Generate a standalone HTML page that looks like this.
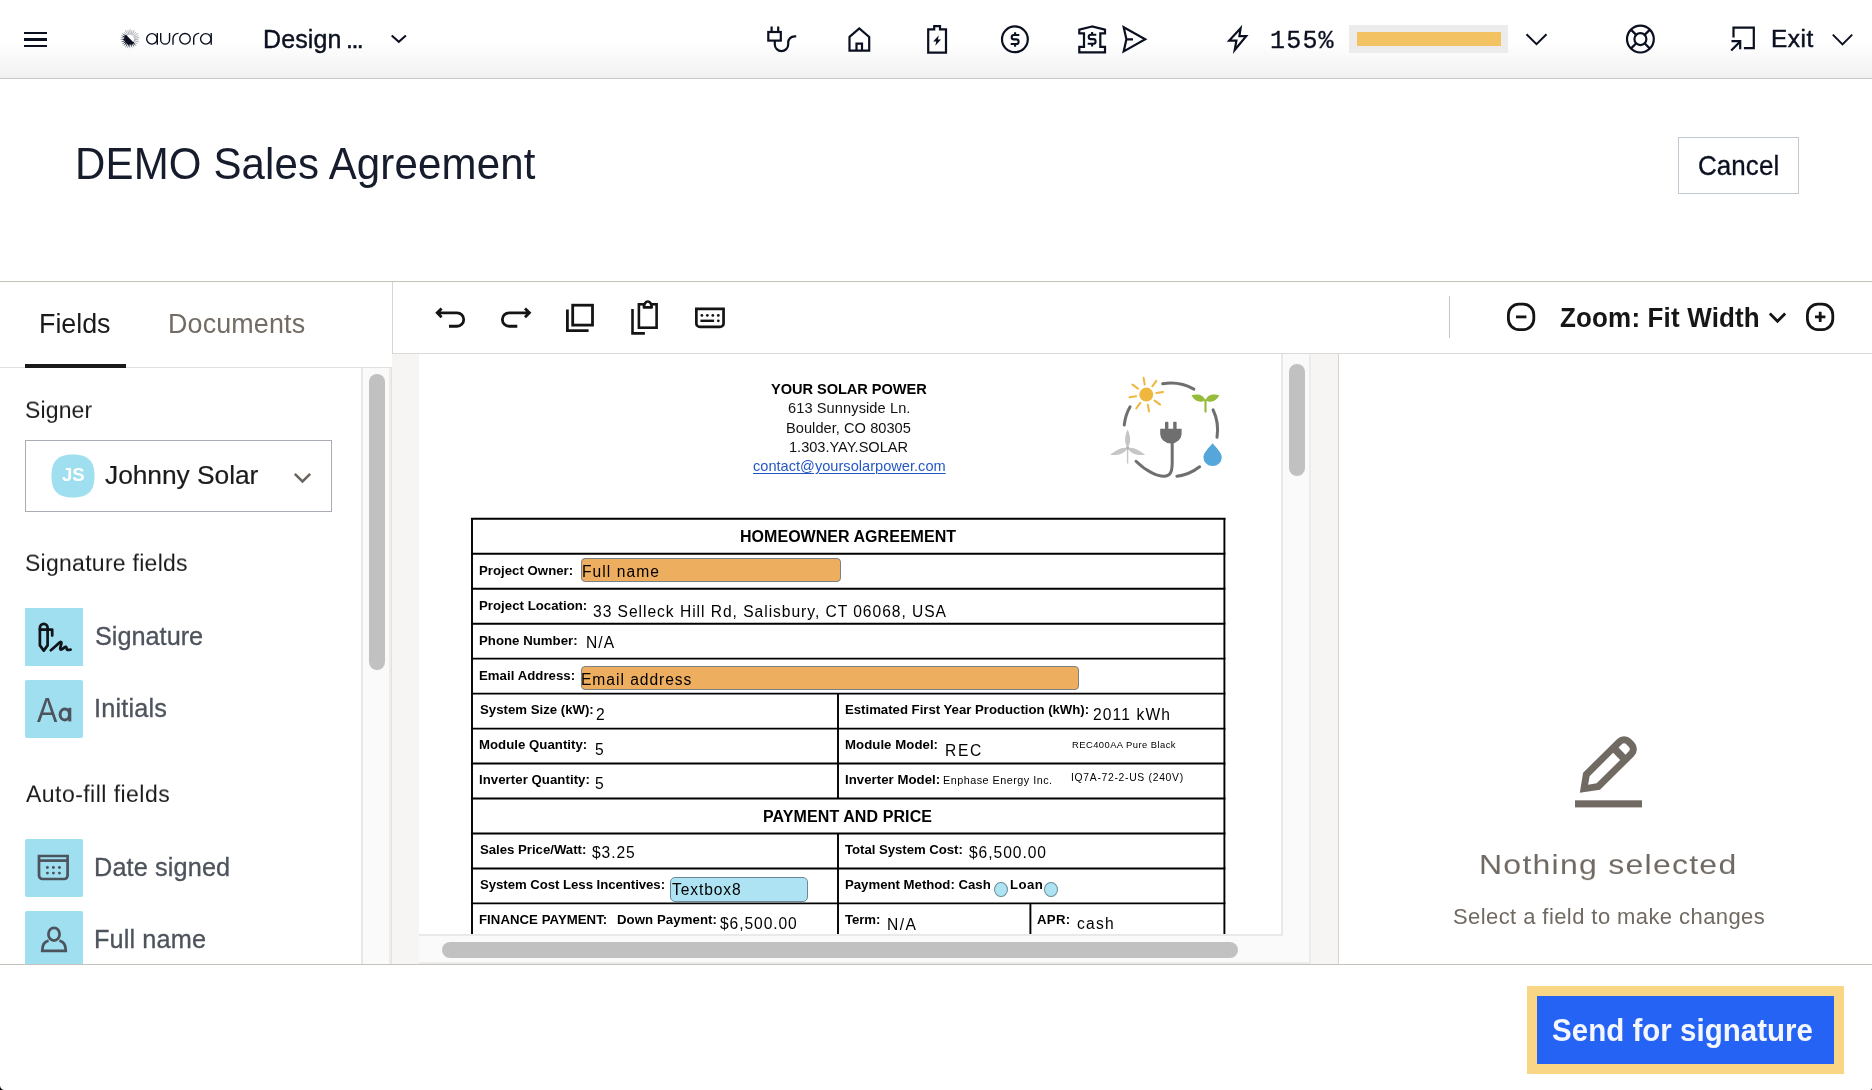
<!DOCTYPE html>
<html lang="en"><head><meta charset="utf-8"><title>DEMO Sales Agreement</title><style>
html,body{margin:0;padding:0;}
body{width:1872px;height:1090px;overflow:hidden;background:#fff;position:relative;
font-family:"Liberation Sans",sans-serif;}
.b{position:absolute;box-sizing:border-box;}
.t{position:absolute;white-space:nowrap;line-height:1;will-change:transform;font-family:"Liberation Sans",sans-serif;}
svg{position:absolute;overflow:visible;}
</style></head>
<body>
<!-- top bar -->
<div class="b" style="left:0px;top:0px;width:1872px;height:78px;background:linear-gradient(#fff 0%,#fff 54%,#f1f1f1 100%);"></div>
<div class="b" style="left:0px;top:78px;width:1872px;height:1px;background:#c7c9c9;"></div>
<div class="b" style="left:24px;top:31.5px;width:23px;height:2.4px;background:#0b1020;"></div>
<div class="b" style="left:24px;top:38.3px;width:23px;height:2.4px;background:#0b1020;"></div>
<div class="b" style="left:24px;top:45.0px;width:23px;height:2.4px;background:#0b1020;"></div>
<svg width="1872" height="78" style="left:0;top:0" viewBox="0 0 1872 78"><g stroke-linecap="butt"><line x1="134.07" y1="39.31" x2="138.64" y2="39.86" stroke="#5d6372" stroke-width="0.5"/><line x1="133.83" y1="40.29" x2="138.97" y2="42.24" stroke="#5d6372" stroke-width="0.5"/><line x1="133.36" y1="41.19" x2="137.14" y2="43.80" stroke="#5d6372" stroke-width="0.5"/><path d="M132.50 42.64L133.40 41.85L136.53 46.29Z" fill="#0b1020"/><path d="M131.51 43.15L132.57 42.59L134.55 47.65Z" fill="#0b1020"/><path d="M130.42 43.41L131.58 43.12L132.29 48.51Z" fill="#0b1020"/><path d="M129.30 43.40L130.50 43.40L129.90 48.80Z" fill="#0b1020"/><path d="M128.22 43.12L129.38 43.41L127.51 48.51Z" fill="#0b1020"/><path d="M127.23 42.59L128.29 43.15L125.25 47.65Z" fill="#0b1020"/><path d="M126.40 41.85L127.30 42.64L123.27 46.29Z" fill="#0b1020"/><path d="M125.77 40.92L126.46 41.91L121.67 44.48Z" fill="#0b1020"/><path d="M125.39 39.87L125.81 40.99L120.55 42.35Z" fill="#0b1020"/><path d="M125.26 38.76L125.41 39.95L119.97 40.01Z" fill="#0b1020"/><path d="M125.41 37.65L125.26 38.84L119.97 37.59Z" fill="#0b1020"/><path d="M125.81 36.61L125.39 37.73L120.55 35.25Z" fill="#0b1020"/><path d="M126.46 35.69L125.77 36.68L121.67 33.12Z" fill="#0b1020"/><line x1="127.11" y1="35.66" x2="124.06" y2="32.21" stroke="#5d6372" stroke-width="0.5"/><line x1="127.95" y1="35.08" x2="125.39" y2="30.21" stroke="#5d6372" stroke-width="0.5"/><line x1="128.89" y1="34.72" x2="127.79" y2="30.26" stroke="#5d6372" stroke-width="0.5"/><line x1="129.90" y1="34.60" x2="129.90" y2="29.10" stroke="#5d6372" stroke-width="0.5"/><line x1="130.91" y1="34.72" x2="132.01" y2="30.26" stroke="#5d6372" stroke-width="0.5"/><line x1="131.85" y1="35.08" x2="134.41" y2="30.21" stroke="#5d6372" stroke-width="0.5"/><line x1="132.69" y1="35.66" x2="135.74" y2="32.21" stroke="#5d6372" stroke-width="0.5"/><line x1="133.36" y1="36.41" x2="137.88" y2="33.29" stroke="#5d6372" stroke-width="0.5"/><line x1="133.83" y1="37.31" x2="138.13" y2="35.68" stroke="#5d6372" stroke-width="0.5"/><line x1="134.07" y1="38.29" x2="139.53" y2="37.63" stroke="#5d6372" stroke-width="0.5"/></g><path d="M125.94 34.84A5.6 5.6 0 0 0 133.86 42.76Z" fill="#0b1020"/><g fill="none" stroke="#0b1020" stroke-width="1.4"><circle cx="151.9" cy="38.85" r="5.25"/><path d="M157.3 32.9V44.8"/><path d="M160.7 32.9V39.7a4.43 4.43 0 0 0 8.86 0V32.9"/><path d="M173 44.8V38.6a5.3 5.3 0 0 1 5.5-5.2"/><circle cx="185.0" cy="38.85" r="5.3"/><path d="M193.7 44.8V38.6a5.3 5.3 0 0 1 5.5-5.2"/><circle cx="205.8" cy="38.85" r="5.25"/><path d="M211.2 32.9V44.8"/></g></svg>
<span class="t" style="left:262.80px;top:26.54px;font-size:25px;font-weight:400;color:#0b1020;letter-spacing:0.110px;-webkit-text-stroke:0.4px #0b1020;">Design</span>
<span class="t" style="left:345.55px;top:26.54px;font-size:25px;font-weight:400;color:#0b1020;letter-spacing:-1.556px;-webkit-text-stroke:0.4px #0b1020;">...</span>
<svg width="1872" height="1090" style="left:0;top:0" viewBox="0 0 1872 1090"><path d="M391.7 35.4L398.79999999999995 41.8L405.9 35.4" fill="none" stroke="#0b1020" stroke-width="2"/></svg>
<svg width="1872" height="78" style="left:0;top:0" viewBox="0 0 1872 78"><g fill="none" stroke="#0b1020" stroke-width="2.2" stroke-linejoin="miter"><path d="M771.6 26.6V32M778.2 26.6V32"/><rect x="768.3" y="32" width="12.5" height="8.6"/><path d="M774.8 40.6V44.4a6.7 6.7 0 0 0 13.4 0V42.6a6.3 6.3 0 0 1 6.3-6.3H796.2"/><path d="M849.5 36.9L859.3 28.4L869.2 36.9V50.7H849.5Z"/><path d="M856.5 50.7V43.6H862V50.7"/><path d="M928.2 29.3H934.2V26.1H940V29.3H946V52.7H928.2Z"/><circle cx="1014.9" cy="39.3" r="12.9"/><path d="M1092 26.5L1079.3 29.7V33.4H1084V46.9H1079.3V52.3H1105V46.9H1100.3V33.4H1105V29.7Z"/><path d="M1123.7 27.2L1145.2 39.3L1123.7 51.4L1126.4 39.3ZM1126.4 39.3H1133"/><path d="M1240.6 28.2L1229.2 40.6H1236.4L1234.7 50L1246.2 36.2H1239.4Z"/><circle cx="1640.4" cy="39.1" r="13.4"/><circle cx="1640.4" cy="39.1" r="6"/><path d="M1644.6 34.9L1649.9 29.6M1636.2 34.9L1630.9 29.6M1644.6 43.3L1649.9 48.6M1636.2 43.3L1630.9 48.6"/><path d="M1733.5 37.6V27.7H1753.8V48.2H1743.9"/><path d="M1731.2 50.5L1740.2 41.5M1731.5 41.2H1740.2V49.2"/></g><path d="M938.8 35.2L933.2 41.6H936.3L935.3 45.8L941 39.6H937.9Z" fill="#0b1020"/></svg>
<svg width="1872" height="78" style="left:0;top:0" viewBox="0 0 1872 78"><g transform="translate(0 0)" fill="none" stroke="#0b1020" stroke-width="2.1"><path d="M1019.3 35H1013.9a2.2 2.2 0 0 0 0 4.4H1016.3a2.3 2.3 0 0 1 0 4.6H1010.7M1015.1 32.2V35M1015.1 44V46.8"/></g><g transform="translate(77.0 -0.3)" fill="none" stroke="#0b1020" stroke-width="2.1"><path d="M1019.3 35H1013.9a2.2 2.2 0 0 0 0 4.4H1016.3a2.3 2.3 0 0 1 0 4.6H1010.7M1015.1 32.2V35M1015.1 44V46.8"/></g></svg>
<span class="t" style="left:1269.8px;top:28.6px;font-size:25px;letter-spacing:1.2px;-webkit-text-stroke:0.3px #0b1020;color:#0b1020;font-family:'Liberation Mono',monospace;">155%</span>
<div class="b" style="left:1349px;top:25px;width:159px;height:28px;background:#ececec;"></div>
<div class="b" style="left:1357px;top:32px;width:144px;height:14px;background:#f3c262;"></div>
<svg width="1872" height="1090" style="left:0;top:0" viewBox="0 0 1872 1090"><path d="M1526.5 34.2L1536.5 44.2L1546.5 34.2" fill="none" stroke="#0b1020" stroke-width="2"/></svg>
<span class="t" style="left:1771.40px;top:27.15px;font-size:24.4px;font-weight:400;color:#0b1020;letter-spacing:0.567px;-webkit-text-stroke:0.45px #0b1020;">Exit</span>
<svg width="1872" height="1090" style="left:0;top:0" viewBox="0 0 1872 1090"><path d="M1832.8 34.6L1842.5 44.4L1852.2 34.6" fill="none" stroke="#0b1020" stroke-width="2"/></svg>
<!-- header -->
<span class="t" style="left:74.86px;top:144.05px;font-size:42px;font-weight:400;color:#161c2c;letter-spacing:0.147px;transform:scaleY(1.035);transform-origin:0 84.65%;">DEMO Sales Agreement</span>
<div class="b" style="left:1678px;top:137px;width:121px;height:57px;border:1px solid #c3c9d0;background:#fff;"></div>
<span class="t" style="left:1697.99px;top:152.99px;font-size:26px;font-weight:400;color:#0b1020;letter-spacing:0.053px;-webkit-text-stroke:0.3px #0b1020;transform:scaleY(1.03);transform-origin:0 84.65%;">Cancel</span>
<div class="b" style="left:0px;top:281px;width:1872px;height:1px;background:#c6c2bb;"></div>
<div class="b" style="left:0px;top:964px;width:1872px;height:1px;background:#c6c2bb;"></div>
<div class="b" style="left:1527px;top:986px;width:317px;height:88px;background:#f9d686;"></div>
<div class="b" style="left:1537px;top:996px;width:297px;height:68px;background:#2563f5;"></div>
<span class="t" style="left:1552.39px;top:1015.83px;font-size:29.5px;font-weight:700;color:#f4f7ff;letter-spacing:0.023px;transform:scaleY(1.075);transform-origin:0 84.65%;">Send for signature</span>
<svg width="1872" height="1090" style="left:0;top:0" viewBox="0 0 1872 1090"><path d="M0 1085.4A4.6 4.6 0 0 0 4.6 1090H0Z" fill="#000"/><path d="M1872 1087.4A2.6 2.6 0 0 1 1869.4 1090H1872Z" fill="#222"/></svg>
<!-- left panel -->
<div class="b" style="left:392px;top:282px;width:1px;height:72px;background:#d9d6d1;"></div>
<div class="b" style="left:0px;top:367px;width:392px;height:1px;background:#e3e1dd;"></div>
<div class="b" style="left:25px;top:364px;width:101px;height:4px;background:#1a1a1a;"></div>
<span class="t" style="left:39.11px;top:311.03px;font-size:26.9px;font-weight:400;color:#1b1b1b;letter-spacing:-0.032px;">Fields</span>
<span class="t" style="left:168.41px;top:311.03px;font-size:26.9px;font-weight:400;color:#736c64;letter-spacing:0.136px;">Documents</span>
<div class="b" style="left:361px;top:368px;width:30px;height:596px;background:#fafafa;border-left:2px solid #e8e8e8;border-right:2px solid #ececec;"></div>
<div class="b" style="left:391px;top:368px;width:1px;height:596px;background:#e2e2e2;"></div>
<div class="b" style="left:369px;top:374px;width:16px;height:296px;background:#c1c1c1;border-radius:8px;"></div>
<span class="t" style="left:25.00px;top:399.43px;font-size:23px;font-weight:400;color:#1b1b1b;letter-spacing:0.135px;transform:scaleY(0.97);transform-origin:0 84.65%;">Signer</span>
<div class="b" style="left:25px;top:440px;width:307px;height:72px;border:1px solid #a8adb5;background:#fff;"></div>
<svg width="44" height="44" style="left:50.6px;top:454.4px" viewBox="0 0 44 44"><path d="M22 0.5C37 0.5 43.5 7 43.5 22S37 43.5 22 43.5S0.5 37 0.5 22S7 0.5 22 0.5Z" fill="#9fdff0"/></svg>
<span class="t" style="left:61.65px;top:466.16px;font-size:18.6px;font-weight:700;color:#fff;letter-spacing:-0.175px;">JS</span>
<span class="t" style="left:105.12px;top:462.35px;font-size:26.4px;font-weight:400;color:#1b1b1b;letter-spacing:-0.062px;-webkit-text-stroke:0.2px #1b1b1b;">Johnny Solar</span>
<svg width="1872" height="1090" style="left:0;top:0" viewBox="0 0 1872 1090"><path d="M294.8 473.8L302.5 481.4L310.2 473.8" fill="none" stroke="#6b645c" stroke-width="2.5"/></svg>
<span class="t" style="left:24.80px;top:552.23px;font-size:23px;font-weight:400;color:#1b1b1b;letter-spacing:0.270px;transform:scaleY(0.97);transform-origin:0 84.65%;">Signature fields</span>
<span class="t" style="left:25.80px;top:783.13px;font-size:23px;font-weight:400;color:#1b1b1b;letter-spacing:0.460px;transform:scaleY(0.97);transform-origin:0 84.65%;">Auto-fill fields</span>
<div class="b" style="left:25px;top:608px;width:58px;height:58px;background:#9fdff0;"></div>
<div class="b" style="left:25px;top:680px;width:58px;height:58px;background:#9fdff0;border-radius:2px;"></div>
<div class="b" style="left:25px;top:839px;width:58px;height:58px;background:#9fdff0;border-radius:2px;"></div>
<div class="b" style="left:25px;top:911px;width:58px;height:53px;background:#9fdff0;border-radius:2px 2px 0 0;"></div>
<span class="t" style="left:94.88px;top:623.98px;font-size:25.3px;font-weight:400;color:#4d535c;letter-spacing:-0.016px;-webkit-text-stroke:0.3px #4d535c;transform:scaleY(1.045);transform-origin:0 84.65%;">Signature</span>
<span class="t" style="left:93.89px;top:695.98px;font-size:25.3px;font-weight:400;color:#4d535c;letter-spacing:0.186px;-webkit-text-stroke:0.3px #4d535c;transform:scaleY(1.045);transform-origin:0 84.65%;">Initials</span>
<span class="t" style="left:94.14px;top:854.98px;font-size:25.3px;font-weight:400;color:#4d535c;letter-spacing:0.116px;-webkit-text-stroke:0.3px #4d535c;transform:scaleY(1.045);transform-origin:0 84.65%;">Date signed</span>
<span class="t" style="left:94.14px;top:926.98px;font-size:25.3px;font-weight:400;color:#4d535c;letter-spacing:0.112px;-webkit-text-stroke:0.3px #4d535c;transform:scaleY(1.045);transform-origin:0 84.65%;">Full name</span>
<svg width="392" height="964" style="left:0;top:0" viewBox="0 0 392 964"><g fill="none" stroke="#101418" stroke-width="2.7" stroke-linejoin="round" stroke-linecap="round"><path d="M39.9 627.8a3.85 3.85 0 0 1 7.7 0V645.4L43.75 650.6L39.9 645.4Z"/><path d="M39.9 629.6H52.2V635.6"/><path d="M50.8 650.2C54.4 647.4 57.6 644 59.8 642.4C61.8 641 61.8 643.2 60.8 645.8C59.8 648.6 60 650.6 62.2 649.2C64 648 65 646.4 66 646.8C67 647.2 66.2 649.2 67.2 649.8C68.2 650.2 69.4 649.8 70.6 649.6"/></g><g fill="none" stroke="#4d535c" stroke-width="3"><ellipse cx="64.8" cy="714.5" rx="4.7" ry="5.4"/><path d="M69.8 707.8V721.4"/></g><g fill="none" stroke="#4d535c" stroke-width="2.7"><path d="M39 856H67.6V875.6a3.4 3.4 0 0 1-3.4 3.4H42.4a3.4 3.4 0 0 1-3.4-3.4Z"/><path d="M39 860.6H67.6"/></g><g fill="#4d535c"><circle cx="47.4" cy="867.5" r="1.45"/><circle cx="47.4" cy="873.1" r="1.45"/><circle cx="53.4" cy="867.5" r="1.45"/><circle cx="53.4" cy="873.1" r="1.45"/><circle cx="59.4" cy="867.5" r="1.45"/><circle cx="59.4" cy="873.1" r="1.45"/></g><g fill="none" stroke="#4d535c" stroke-width="2.7"><ellipse cx="54" cy="934.2" rx="5.6" ry="6.4"/><path d="M48.6 940.6C44.4 941.6 42.2 945 42.2 950.8H65.8C65.8 945 63.6 941.6 59.4 940.6"/></g></svg>
<span class="t" style="left:37.24px;top:695.58px;font-size:30.5px;font-weight:400;color:#4d535c;letter-spacing:0.000px;transform:scaleY(1.165);transform-origin:0 84.65%;">A</span>
<!-- toolbar -->
<div class="b" style="left:393px;top:353px;width:1479px;height:1px;background:#dcdad6;"></div>
<svg width="1872" height="360" style="left:0;top:0" viewBox="0 0 1872 360"><g fill="none" stroke="#141414" stroke-width="2.8"><path d="M441.6 308.4L437.2 312.8L441.6 317.2M437.4 312.8H457a6.72 6.72 0 0 1 0 13.45H449"/><path d="M525 308.4L529.4 312.8L525 317.2M529.2 312.8H509.1a6.72 6.72 0 0 0 0 13.45H517.3"/><rect x="572.7" y="305.2" width="19.8" height="19.9"/><path d="M567.4 309.4V330.6H588.6"/></g><g fill="none" stroke="#141414" stroke-width="2.6"><rect x="638.9" y="304.3" width="17.7" height="23.4"/><path d="M632.5 309.1V333.4H644.9"/><path d="M643.9 307.4a3.9 5.9 0 0 1 7.8 0Z" stroke-linejoin="round" fill="#fff"/></g><g fill="none" stroke="#141414" stroke-width="2.7"><path d="M696.35 308.85H723.55V323.4a3.55 3.55 0 0 1-3.55 3.55H699.9a3.55 3.55 0 0 1-3.55-3.55Z"/><path d="M700.4 320.8H714.1" stroke-width="2.4"/></g><g fill="#141414"><circle cx="701.9" cy="315.4" r="1.4"/><circle cx="707.3" cy="315.4" r="1.4"/><circle cx="712.8" cy="315.4" r="1.4"/><circle cx="718.3" cy="315.4" r="1.4"/><circle cx="718.3" cy="320.8" r="1.4"/></g><path d="M1449.5 296V338" stroke="#c9c5be" stroke-width="1"/><g fill="none" stroke="#141414" stroke-width="2.8"><rect x="1508.4" y="304.2" width="25.4" height="25.4" rx="10.5"/><path d="M1516 316.9H1526.4"/><rect x="1807.4" y="304.2" width="25.4" height="25.4" rx="10.5"/><path d="M1815 316.9H1825.4M1820.2 311.7V322.1"/><path d="M1769.8 313.6L1777.5 321.2L1785.2 313.6"/></g></svg>
<span class="t" style="left:1560.05px;top:304.99px;font-size:26px;font-weight:700;color:#161616;letter-spacing:0.154px;transform:scaleY(1.045);transform-origin:0 84.65%;">Zoom: Fit Width</span>
<!-- document viewer -->
<div class="b" style="left:392px;top:354px;width:946px;height:610px;background:#f7f5f3;"></div>
<div class="b" style="left:1338px;top:354px;width:1px;height:610px;background:#d9d6d1;"></div>
<div class="b" style="left:419px;top:354px;width:892px;height:610px;background:#fafafa;"></div>
<div class="b" style="left:419px;top:354px;width:862px;height:580px;background:#fff;"></div>
<div class="b" style="left:1281px;top:354px;width:2px;height:582px;background:#e9e9e9;"></div>
<div class="b" style="left:419px;top:934px;width:864px;height:2px;background:#e9e9e9;"></div>
<div class="b" style="left:1309px;top:354px;width:2px;height:610px;background:#ececec;"></div>
<div class="b" style="left:419px;top:962px;width:892px;height:2px;background:#ececec;"></div>
<div class="b" style="left:1289px;top:364px;width:16px;height:112px;background:#c1c1c1;border-radius:8px;"></div>
<div class="b" style="left:442px;top:942px;width:796px;height:16px;background:#c1c1c1;border-radius:8px;"></div>
<span class="t" style="left:771.35px;top:382.24px;font-size:14.6px;font-weight:700;color:#000;letter-spacing:-0.047px;">YOUR SOLAR POWER</span>
<span class="t" style="left:788.31px;top:401.44px;font-size:14.6px;font-weight:400;color:#111;letter-spacing:0.095px;">613 Sunnyside Ln.</span>
<span class="t" style="left:786.41px;top:420.64px;font-size:14.6px;font-weight:400;color:#111;letter-spacing:0.048px;">Boulder, CO 80305</span>
<span class="t" style="left:789.34px;top:439.64px;font-size:14.6px;font-weight:400;color:#111;letter-spacing:-0.015px;">1.303.YAY.SOLAR</span>
<span class="t" style="left:752.64px;top:459.04px;font-size:14.6px;font-weight:400;color:#2457c5;letter-spacing:0.009px;text-decoration:underline;text-decoration-thickness:1px;text-underline-offset:1.5px;">contact@yoursolarpower.com</span>
<svg width="1872" height="934" style="left:0;top:0" viewBox="0 0 1872 934"><g stroke="#000" stroke-width="1.9" fill="none"><path d="M471 518.8H1225.4"/><path d="M471 553.7H1225.4"/><path d="M471 588.7H1225.4"/><path d="M471 623.7H1225.4"/><path d="M471 658.6H1225.4"/><path d="M471 693.6H1225.4"/><path d="M471 728.6H1225.4"/><path d="M471 763.5H1225.4"/><path d="M471 798.5H1225.4"/><path d="M471 833.5H1225.4"/><path d="M471 868.5H1225.4"/><path d="M471 903.4H1225.4"/><path d="M472 518V934M1224.4 518V934"/><path d="M838 693.6V798.5M838 833.5V934M1030.4 903.4V934"/></g></svg>
<span class="t" style="left:739.54px;top:529.36px;font-size:16px;font-weight:700;color:#000;letter-spacing:0.034px;">HOMEOWNER AGREEMENT</span>
<span class="t" style="left:763.14px;top:808.66px;font-size:16px;font-weight:700;color:#000;letter-spacing:0.097px;">PAYMENT AND PRICE</span>
<span class="t" style="left:479.43px;top:563.68px;font-size:13.2px;font-weight:700;color:#000;letter-spacing:0.024px;">Project Owner:</span>
<span class="t" style="left:479.43px;top:598.63px;font-size:13.2px;font-weight:700;color:#000;letter-spacing:0.034px;">Project Location:</span>
<span class="t" style="left:479.43px;top:633.58px;font-size:13.2px;font-weight:700;color:#000;letter-spacing:0.036px;">Phone Number:</span>
<span class="t" style="left:479.43px;top:668.53px;font-size:13.2px;font-weight:700;color:#000;letter-spacing:0.048px;">Email Address:</span>
<span class="t" style="left:479.93px;top:703.48px;font-size:13.2px;font-weight:700;color:#000;letter-spacing:0.010px;">System Size (kW):</span>
<span class="t" style="left:479.43px;top:738.43px;font-size:13.2px;font-weight:700;color:#000;letter-spacing:0.036px;">Module Quantity:</span>
<span class="t" style="left:479.43px;top:773.38px;font-size:13.2px;font-weight:700;color:#000;letter-spacing:0.056px;">Inverter Quantity:</span>
<span class="t" style="left:844.73px;top:703.48px;font-size:13.2px;font-weight:700;color:#000;letter-spacing:-0.010px;">Estimated First Year Production (kWh):</span>
<span class="t" style="left:844.73px;top:738.43px;font-size:13.2px;font-weight:700;color:#000;letter-spacing:0.059px;">Module Model:</span>
<span class="t" style="left:844.73px;top:773.38px;font-size:13.2px;font-weight:700;color:#000;letter-spacing:0.045px;">Inverter Model:</span>
<span class="t" style="left:479.93px;top:843.28px;font-size:13.2px;font-weight:700;color:#000;letter-spacing:-0.011px;">Sales Price/Watt:</span>
<span class="t" style="left:845.48px;top:843.28px;font-size:13.2px;font-weight:700;color:#000;letter-spacing:-0.039px;">Total System Cost:</span>
<span class="t" style="left:479.93px;top:878.23px;font-size:13.2px;font-weight:700;color:#000;letter-spacing:-0.041px;">System Cost Less Incentives:</span>
<span class="t" style="left:844.73px;top:878.23px;font-size:13.2px;font-weight:700;color:#000;letter-spacing:-0.007px;">Payment Method: Cash</span>
<span class="t" style="left:1010.33px;top:878.23px;font-size:13.2px;font-weight:700;color:#000;letter-spacing:0.463px;">Loan</span>
<span class="t" style="left:479.43px;top:913.18px;font-size:13.2px;font-weight:700;color:#000;letter-spacing:0.048px;">FINANCE PAYMENT:</span>
<span class="t" style="left:616.73px;top:913.18px;font-size:13.2px;font-weight:700;color:#000;letter-spacing:0.087px;">Down Payment:</span>
<span class="t" style="left:845.48px;top:913.18px;font-size:13.2px;font-weight:700;color:#000;letter-spacing:-0.062px;">Term:</span>
<span class="t" style="left:1037.49px;top:913.18px;font-size:13.2px;font-weight:700;color:#000;letter-spacing:0.325px;">APR:</span>
<div class="b" style="left:581px;top:557.9px;width:260px;height:23.8px;background:#eeae60;border:1px solid #7d8087;border-radius:4px;"></div>
<div class="b" style="left:581px;top:666.2px;width:498px;height:23.5px;background:#eeae60;border:1px solid #7d8087;border-radius:4px;"></div>
<div class="b" style="left:670.3px;top:877.2px;width:137.5px;height:24.5px;background:#aee3f3;border:1px solid #6d8896;border-radius:5px;"></div>
<span class="t" style="left:581.55px;top:563.69px;font-size:15.6px;font-weight:400;color:#000;letter-spacing:1.064px;">Full name</span>
<span class="t" style="left:581.35px;top:671.69px;font-size:15.6px;font-weight:400;color:#000;letter-spacing:0.968px;">Email address</span>
<span class="t" style="left:672.29px;top:882.19px;font-size:15.6px;font-weight:400;color:#000;letter-spacing:0.882px;">Textbox8</span>
<span class="t" style="left:592.94px;top:603.59px;font-size:15.6px;font-weight:400;color:#000;letter-spacing:0.967px;">33 Selleck Hill Rd, Salisbury, CT 06068, USA</span>
<span class="t" style="left:585.65px;top:635.49px;font-size:15.6px;font-weight:400;color:#000;letter-spacing:1.044px;">N/A</span>
<span class="t" style="left:596.45px;top:706.59px;font-size:15.6px;font-weight:400;color:#000;letter-spacing:0.000px;">2</span>
<span class="t" style="left:1093.45px;top:706.59px;font-size:15.6px;font-weight:400;color:#000;letter-spacing:1.137px;">2011 kWh</span>
<span class="t" style="left:594.77px;top:741.79px;font-size:15.6px;font-weight:400;color:#000;letter-spacing:0.000px;">5</span>
<span class="t" style="left:945.35px;top:743.29px;font-size:15.6px;font-weight:400;color:#000;letter-spacing:1.637px;">REC</span>
<span class="t" style="left:1072.45px;top:740.04px;font-size:9.4px;font-weight:400;color:#000;letter-spacing:0.451px;">REC400AA Pure Black</span>
<span class="t" style="left:594.77px;top:775.79px;font-size:15.6px;font-weight:400;color:#000;letter-spacing:0.000px;">5</span>
<span class="t" style="left:942.73px;top:774.86px;font-size:10.8px;font-weight:400;color:#000;letter-spacing:0.491px;">Enphase Energy Inc.</span>
<span class="t" style="left:1071.26px;top:773.00px;font-size:10.4px;font-weight:400;color:#000;letter-spacing:0.678px;">IQ7A-72-2-US (240V)</span>
<span class="t" style="left:592.48px;top:845.49px;font-size:15.6px;font-weight:400;color:#000;letter-spacing:0.906px;">$3.25</span>
<span class="t" style="left:969.08px;top:844.89px;font-size:15.6px;font-weight:400;color:#000;letter-spacing:0.948px;">$6,500.00</span>
<span class="t" style="left:720.08px;top:916.39px;font-size:15.6px;font-weight:400;color:#000;letter-spacing:0.923px;">$6,500.00</span>
<span class="t" style="left:886.95px;top:917.19px;font-size:15.6px;font-weight:400;color:#000;letter-spacing:1.394px;">N/A</span>
<span class="t" style="left:1076.58px;top:916.49px;font-size:15.6px;font-weight:400;color:#000;letter-spacing:1.208px;">cash</span>
<div class="b" style="left:993.9px;top:881.6px;width:13.8px;height:15.2px;background:#aee3f3;border:1px solid #6f8f9a;border-radius:50%;"></div>
<div class="b" style="left:1043.8999999999999px;top:881.6px;width:13.8px;height:15.2px;background:#aee3f3;border:1px solid #6f8f9a;border-radius:50%;"></div>
<svg width="1872" height="934" style="left:0;top:0" viewBox="0 0 1872 934"><g fill="none" stroke="#6f6f6f" stroke-width="3" stroke-linecap="round"><path d="M1162.67 383.81A46.8 46.8 0 0 1 1193.85 389.17"/><path d="M1213.04 409.75A46.8 46.8 0 0 1 1217.02 437.22"/><path d="M1199.61 466.78A46.8 46.8 0 0 1 1176.91 476.30"/><path d="M1130.07 406.85A46.8 46.8 0 0 0 1124.26 425.01"/><path d="M1136.02 461.22C1147 472 1158 476.6 1164.6 476.2C1171.4 475.8 1172.2 470 1172.2 462V443"/></g><g fill="#6f6f6f"><rect x="1165.0" y="421.8" width="3.4" height="7.5" rx="0.8"/><rect x="1173.2" y="421.8" width="3.4" height="7.5" rx="0.8"/><path d="M1160.2 428.8H1181.6V433.2a10.7 10.4 0 0 1-21.4 0Z"/></g><g stroke="#f0b73f" stroke-width="2" stroke-linecap="round"><path d="M1144.7 384.5L1143.6 377.8"/><path d="M1152.3 386.3L1156.3 380.8"/><path d="M1156.4 393.0L1163.1 391.9"/><path d="M1154.6 400.6L1160.1 404.6"/><path d="M1147.9 404.7L1149.0 411.4"/><path d="M1140.3 402.9L1136.3 408.4"/><path d="M1136.2 396.2L1129.5 397.3"/><path d="M1138.0 388.6L1132.5 384.6"/></g><circle cx="1146.3" cy="394.6" r="7" fill="#f0b73f"/><g fill="#95bc3a"><path d="M1205.4 400.2C1203.4 394.4 1197.4 393.4 1191.6 395.2C1194.2 400.8 1200.2 403.6 1205.4 400.2Z"/><path d="M1205.4 400.2C1207.4 394.4 1213.4 393.4 1219.2 395.2C1216.6 400.8 1210.6 403.6 1205.4 400.2Z"/><path d="M1204.4 399.6H1206.6V411.6a1.1 1.1 0 0 1-2.2 0Z"/></g><path d="M1212.6 443.2C1217 448.4 1221.8 453 1221.8 457.2a9.2 8.8 0 0 1-18.4 0C1203.4 453 1208.2 448.4 1212.6 443.2Z" fill="#55a7db"/><g fill="#c6c6c6"><path d="M1126.8999999999999 448.0H1128.3V463.6H1126.8999999999999Z"/><path d="M1127.6 448.0C1123.3999999999999 442.0 1125.0 435.0 1127.6 429.6C1130.1999999999998 435.0 1131.8 442.0 1127.6 448.0Z"/><path d="M1127.6 448.0C1134.0 446.8 1139.6 451.0 1145.1999999999998 454.8C1138.6 455.8 1130.6 454.2 1127.6 448.0Z"/><path d="M1127.6 448.0C1121.1999999999998 446.8 1115.6 451.0 1110.0 454.8C1116.6 455.8 1124.6 454.2 1127.6 448.0Z"/></g><circle cx="1127.6" cy="448.0" r="1.7" fill="#b4b4b4"/></svg>
<!-- right panel -->
<svg width="1872" height="1090" style="left:0;top:0" viewBox="0 0 1872 1090"><g transform="translate(1591.55 781.25) rotate(-44.7)" fill="#716a63" fill-rule="evenodd"><path d="M-16.5 0L0 -12H47.7A10 10 0 0 1 57.7 -2V2A10 10 0 0 1 47.7 12H0ZM-4.8 0L2.2 -5H35.3V5H2.2ZM42.9 -5H47.2A3.5 3.5 0 0 1 50.7 -1.5V1.5A3.5 3.5 0 0 1 47.2 5H42.9Z"/></g><rect x="1575" y="800.3" width="67" height="7.1" fill="#716a63"/></svg>
<span class="t" style="left:1479.47px;top:847.41px;font-size:32px;font-weight:400;color:#716a63;letter-spacing:1.254px;transform:scaleY(0.868);transform-origin:0 84.65%;">Nothing selected</span>
<span class="t" style="left:1452.60px;top:905.98px;font-size:22px;font-weight:400;color:#716a63;letter-spacing:0.418px;">Select a field to make changes</span>
</body></html>
